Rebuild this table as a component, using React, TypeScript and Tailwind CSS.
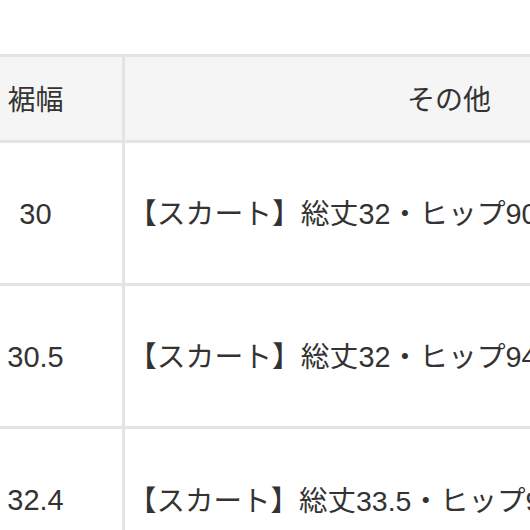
import React from "react";

const rows = [
  { w: "30", o: "【スカート】総丈32・ヒップ90cm・ウエスト64cm", s: "text-[28.8px]" },
  { w: "30.5", o: "【スカート】総丈32・ヒップ94cm・ウエスト66cm", s: "text-[28.8px]" },
  { w: "32.4", o: "【スカート】総丈33.5・ヒップ98cm・ウエスト70cm", s: "text-[28.5px]" },
];

export default function App() {
  return (
    <div
      className="w-[530px] h-[530px] overflow-hidden bg-white text-[#333333]"
      style={{ fontFamily: '"Liberation Sans", "Noto Sans CJK JP", sans-serif' }}
    >
      <div className="h-[54px]" />
      <div className="w-[900px] border-t-[3px] border-[#e4e4e4]">
        <div className="flex h-[86px] bg-[#f5f5f5] border-b-[3px] border-[#e4e4e4]">
          <div className="w-[125px] shrink-0 border-r-[3px] border-[#e4e4e4] flex items-center justify-center pr-[51px] pt-[4px] text-[28px]">
            裾幅
          </div>
          <div className="w-[648px] shrink-0 flex items-center justify-center pt-[4px] text-[28px]">その他</div>
        </div>
        {rows.map((r, i) => (
          <div key={i} className="flex h-[143px] border-b-[3px] border-[#e4e4e4]">
            <div className="w-[125px] shrink-0 border-r-[3px] border-[#e4e4e4] flex items-center justify-center pr-[51px] pt-[4px] text-[29px]">
              {r.w}
            </div>
            <div className={`flex-1 flex items-center pl-[3px] pt-[4px] whitespace-nowrap ${r.s}`}>{r.o}</div>
          </div>
        ))}
      </div>
    </div>
  );
}
